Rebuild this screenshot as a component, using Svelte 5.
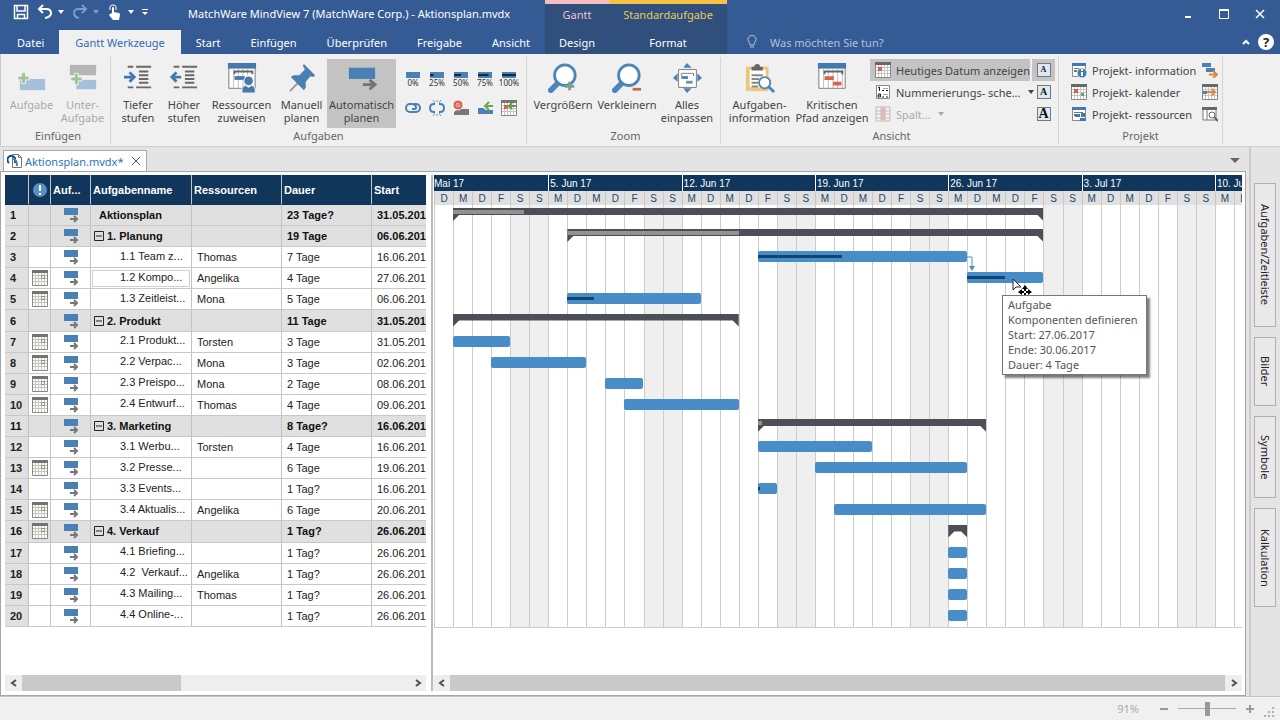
<script>
  // task rows: start / end / done are day offsets from 30.05.2017
  const tasks = [
    { name: 'Aktionsplan', level: 0, dur: '23 Tage?', date: '31.05.201', start: 1, end: 32, done: 4.75 },
    { name: '1. Planung', level: 1, dur: '19 Tage', date: '06.06.201', start: 7, end: 32, done: 16 },
    { name: '1.1 Team z...', level: 2, res: 'Thomas', dur: '7 Tage', date: '16.06.201', start: 17, end: 28, done: 21.4 },
    { name: '1.2 Kompo...', level: 2, cal: true, res: 'Angelika', dur: '4 Tage', date: '27.06.201', start: 28, end: 32, done: 30, selected: true },
    { name: '1.3 Zeitleist...', level: 2, cal: true, res: 'Mona', dur: '5 Tage', date: '06.06.201', start: 7, end: 14, done: 8.4 },
    { name: '2. Produkt', level: 1, dur: '11 Tage', date: '31.05.201', start: 1, end: 16 },
    { name: '2.1 Produkt...', level: 2, cal: true, res: 'Torsten', dur: '3 Tage', date: '31.05.201', start: 1, end: 4 },
    { name: '2.2 Verpac...', level: 2, cal: true, res: 'Mona', dur: '3 Tage', date: '02.06.201', start: 3, end: 8 },
    { name: '2.3 Preispo...', level: 2, cal: true, res: 'Mona', dur: '2 Tage', date: '08.06.201', start: 9, end: 11 },
    { name: '2.4 Entwurf...', level: 2, cal: true, res: 'Thomas', dur: '4 Tage', date: '09.06.201', start: 10, end: 16 },
    { name: '3. Marketing', level: 1, dur: '8 Tage?', date: '16.06.201', start: 17, end: 29, done: 17.2 },
    { name: '3.1 Werbu...', level: 2, res: 'Torsten', dur: '4 Tage', date: '16.06.201', start: 17, end: 23 },
    { name: '3.2 Presse...', level: 2, cal: true, dur: '6 Tage', date: '19.06.201', start: 20, end: 28 },
    { name: '3.3 Events...', level: 2, dur: '1 Tag?', date: '16.06.201', start: 17, end: 18, done: 17.1 },
    { name: '3.4 Aktualis...', level: 2, cal: true, res: 'Angelika', dur: '6 Tage', date: '20.06.201', start: 21, end: 29 },
    { name: '4. Verkauf', level: 1, cal: true, dur: '1 Tag?', date: '26.06.201', start: 27, end: 28 },
    { name: '4.1 Briefing...', level: 2, dur: '1 Tag?', date: '26.06.201', start: 27, end: 28 },
    { name: '4.2  Verkauf...', level: 2, res: 'Angelika', dur: '1 Tag?', date: '26.06.201', start: 27, end: 28 },
    { name: '4.3 Mailing...', level: 2, res: 'Thomas', dur: '1 Tag?', date: '26.06.201', start: 27, end: 28 },
    { name: '4.4 Online-...', level: 2, dur: '1 Tag?', date: '26.06.201', start: 27, end: 28 },
  ]

  const DAYS = 43
  const letters = 'DMDFSSM'
  const days = Array.from({ length: DAYS }, (_, i) => letters[i % 7])
  const isWeekend = (i) => i % 7 === 4 || i % 7 === 5

  const weeks = [
    { label: 'Mai 17', span: 6 },
    { label: '5. Jun 17', span: 7 },
    { label: '12. Jun 17', span: 7 },
    { label: '19. Jun 17', span: 7 },
    { label: '26. Jun 17', span: 7 },
    { label: '3. Jul 17', span: 7 },
    { label: '10. Jul 17', span: 2 },
  ]

  const pct = (n) => (n / DAYS) * 100 + '%'
  const donePct = (t) => ((t.done - t.start) / (t.end - t.start)) * 100 + '%'

  const tabs = ['Datei', 'Gantt Werkzeuge', 'Start', 'Einfügen', 'Überprüfen', 'Freigabe', 'Ansicht']
  let activeTab = $state('Gantt Werkzeuge')

  const progress = [0, 25, 50, 75, 100]
  const linkIcons = ['link', 'unlink', 'block', 'moveback', 'calback']
  const linkTitles = ['Verknüpfen', 'Trennen', 'Sperren', 'Verschieben', 'Kalender']
  const sideTabs = [
    { label: 'Aufgaben/Zeitleiste', size: 'tall' },
    { label: 'Bilder', size: 'short' },
    { label: 'Symbole', size: 'mid' },
    { label: 'Kalkulation', size: 'long' },
  ]

  let question = $state('')
  let zoom = $state(50)
</script>

{#snippet big(name)}
  <svg class="big-icon" viewBox="0 0 32 32" aria-hidden="true">
    {#if name === 'task'}
      <path d="M3 17h27v12H3z" fill="#a6c0da" />
      <path d="M5 10h4v4h4v4H9v4H5v-4H1v-4h4z" fill="#9fc49a" stroke="#f0f0f0" />
    {:else if name === 'subtask'}
      <path d="M2 2h28v11H2z" fill="#b5b5b5" />
      <path d="M9 18h21v10H9z" fill="#a6c0da" />
      <path d="M7 11h4v4h4v4h-4v4H7v-4H3v-4h4z" fill="#9fc49a" stroke="#f0f0f0" />
    {:else if name === 'indent' || name === 'outdent'}
      <path d="M5 4h6M5 26h6M14 4h16M17 9h10M17 13h10M17 17h10M17 21h10M14 26h16" stroke="#686868" stroke-width="2" />
      {#if name === 'indent'}
        <path d="M1 15h10M7 10l5 5-5 5" fill="none" stroke="#4179b0" stroke-width="3" />
      {:else}
        <path d="M4 15h9M8 10l-5 5 5 5" fill="none" stroke="#4179b0" stroke-width="3" />
      {/if}
    {:else if name === 'resources'}
      <path d="M2 1h28v26H2z" fill="#fff" stroke="#777" />
      <path d="M1 0h30v6H1z" fill="#4479ac" />
      <path d="M7 6v21M12 6v21M17 6v21M22 6v21" stroke="#bbb" />
      <path d="M8 12v-3h19v3" fill="none" stroke="#666" stroke-width="2" />
      <path d="M8 14h11v4H8z" fill="#4479ac" />
      <circle cx="23" cy="19" r="5" fill="#4479ac" stroke="#f0f0f0" />
      <path d="M16 32v-4q0-4 4-4l3 2 3-2q4 0 4 4v4z" fill="#4479ac" stroke="#f0f0f0" />
    {:else if name === 'pin'}
      <path d="M13 20L3 30" stroke="#999" stroke-width="2" />
      <path d="M18 1l12 12-2 2-3-1-5 6v6l-2 3L4 15l3-2h6l6-6-2-4z" fill="#4b80b5" />
    {:else if name === 'auto'}
      <path d="M2 5h28v12H2z" fill="#4b80b5" />
      <path d="M17 23h12M24 18l6 5-6 5" fill="none" stroke="#737373" stroke-width="3" />
    {:else if name === 'zoomin' || name === 'zoomout'}
      <path d="M12 20L3 29" stroke="#4b86b9" stroke-width="6" stroke-linecap="round" />
      <circle cx="18" cy="13" r="11" fill="#fff" stroke="#4b86b9" stroke-width="3" />
      {#if name === 'zoomin'}
        <path d="M23 20v9M18 25h10" stroke="#79a18c" stroke-width="3" />
      {:else}
        <path d="M22 28h9" stroke="#d0634c" stroke-width="3" />
      {/if}
    {:else if name === 'fit'}
      <path d="M7 7h19v19H7z" fill="#fff" stroke="#777" />
      <path d="M16 0l5 5H12zM16 32l5-5H12zM1 16l5-5v9zM32 16l-5-5v9z" fill="#4b80b5" />
      <path d="M10 14v-3h13v3" fill="none" stroke="#777" />
      <path d="M10 14h7v3h-7z" fill="#4b80b5" />
      <path d="M15 19h7v3h-7z" fill="#6b9a88" />
    {:else if name === 'clipboard'}
      <path d="M1 4h24v26H1z" fill="#ebc777" />
      <path d="M5 7h17v19H5z" fill="#fff" />
      <path d="M7 8V4h3q0-3 3-3t3 3h3v4z" fill="#666" />
      <path d="M7 13h12M7 17h8M7 21h7M7 25h7" stroke="#888" stroke-width="2" />
      <path d="M25 25l6 6" stroke="#4b86b9" stroke-width="3" />
      <circle cx="21" cy="21" r="6" fill="#fff" stroke="#4b86b9" stroke-width="2" />
    {:else if name === 'critical'}
      <path d="M2 1h28v26H2z" fill="#fff" stroke="#777" />
      <path d="M1 0h30v6H1z" fill="#4479ac" />
      <path d="M7 6v21M12 6v21M17 6v21M22 6v21M27 6v21" stroke="#bbb" />
      <path d="M8 12v-3h19v3" fill="none" stroke="#666" stroke-width="2" />
      <path d="M8 14h10v4H8zM17 20h9v4h-9z" fill="#dc6347" />
    {/if}
  </svg>
{/snippet}

{#snippet small(name)}
  <svg class="small-icon" viewBox="0 0 16 16" aria-hidden="true">
    {#if name === 'link'}
      <path d="M9 12H5a4 4 0 010-8h2q4 0 4 4 0 1-2 1H7" fill="none" stroke="#4b80b5" stroke-width="2" />
      <path d="M9 4h2a4 4 0 010 8H9" fill="none" stroke="#4b80b5" stroke-width="2" />
    {:else if name === 'unlink'}
      <path d="M6 4H5Q1 4 1 8t4 4h1M10 4h1q4 0 4 4t-4 4h-1" fill="none" stroke="#4b80b5" stroke-width="2" />
      <path d="M4 0l2 3M12 0l-2 3M4 16l2-3M12 16l-2-3M8 0v2M8 14v2" stroke="#6b9bc8" />
    {:else if name === 'block'}
      <path d="M5 9h11v6H1v-3z" fill="#777" />
      <circle cx="5" cy="5" r="5" fill="#d8604e" stroke="#f0f0f0" />
      <circle cx="5" cy="5" r="2" fill="none" stroke="#efb3a9" />
      <path d="M3 3l4 4" stroke="#efb3a9" />
    {:else if name === 'moveback'}
      <path d="M1 8h5l3 2h7v4H1z" fill="#4b80b5" />
      <path d="M16 6h-7M12 2L8 6l4 4" fill="none" stroke="#6aa84f" stroke-width="2" />
    {:else if name === 'calback'}
      {@render calendarGrid('#777')}
      <path d="M3 5h4v4H3z" fill="#d8604e" />
      <path d="M15 6H9M11 3L8 6l3 3" fill="none" stroke="#5b9b49" stroke-width="2" />
    {:else if name === 'today'}
      {@render calendarGrid('#686868')}
      <path d="M3 5h4v4H3z" fill="#d8604e" />
    {:else if name === 'pcal'}
      {@render calendarGrid('#686868')}
      <path d="M3 5h4v4H3z" fill="#d8604e" />
      <path d="M10 9h3v3h-3z" fill="#6b9a88" />
    {:else if name === 'calout'}
      {@render calendarGrid('#686868')}
      <path d="M5 8h8M10 5l3 3-3 3" fill="none" stroke="#e48640" stroke-width="2" />
      <path d="M1 7h4v3H1z" fill="#4b80b5" />
    {:else if name === 'row'}
      {@render calendarGrid('#737373')}
      <path d="M9.500 5.500h3v3h-3z" fill="#fff" stroke="#72a554" />
    {:else if name === 'numbering'}
      <path d="M1.500 1.500h13v13h-13z" fill="#fff" stroke="#888" />
      <path d="M3 4l1.500-1v4M3 10h2.500v3H3v-2h2" fill="none" stroke="#222" />
      <path d="M7 6.500h2M11 6.500h2M7 13h2M11 13h2" stroke="#222" />
      <path d="M8 4.500h5M8 10.500h5" stroke="#8bb0d3" />
    {:else if name === 'columns'}
      <path d="M1 1h14v14H1z" fill="#f7f0f0" stroke="#bbb" />
      <path d="M6 1v14M10 1v14M1 5h14M1 8h14M1 12h14" stroke="#c9bcbc" />
      <path d="M6 2h4v12H6z" fill="#e0b9b9" />
    {:else if name === 'pinfo'}
      {@render ganttSheet()}
      <circle cx="11" cy="11" r="5" fill="#4179b0" stroke="#f0f0f0" />
      <path d="M11 10v4M11 7v2" stroke="#fff" stroke-width="2" />
    {:else if name === 'pres'}
      {@render ganttSheet()}
      <path d="M4 8h5v3H4zM9 12h6v3H9zM10 7h4v4h-4z" fill="#4179b0" />
    {:else if name === 'export'}
      <path d="M0 1h9v4H0zM4 6h9v4H4z" fill="#4b80b5" />
      <path d="M7 12.500h7M11 9l4 3.500-4 3.500" fill="none" stroke="#e48640" stroke-width="2" />
    {:else if name === 'search'}
      <path d="M1 2h13v12H1z" fill="#fff" stroke="#777" />
      <path d="M0 1h15v3H0z" fill="#686868" />
      <path d="M5 4v10" stroke="#777" />
      <circle cx="10" cy="9" r="3" fill="#fff" stroke="#666" />
      <path d="M12 11l4 4" stroke="#666" stroke-width="2" />
    {/if}
  </svg>
{/snippet}

{#snippet calendarGrid(color)}
  <path d="M.5.5h15v15H.5z" fill="#fff" stroke="#888" />
  <path d="M3.500 3v12M6.500 3v12M9.500 3v12M12.500 3v12M1 5.500h14M1 8.500h14M1 11.500h14" stroke="#c4c4c4" />
  <path d="M0 0h16v3H0z" fill={color} />
{/snippet}

{#snippet ganttSheet()}
  <path d="M1.500 1.500h13v13h-13z" fill="#fff" stroke="#888" />
  <path d="M1 1h14v3H1z" fill="#4179b0" />
  <path d="M3 6.500h9" stroke="#777" />
  <path d="M3 8h5v2H3z" fill="#4179b0" />
{/snippet}

{#snippet bigButton(icon, lines, cls)}
  <button class="big-button {cls}">
    {@render big(icon)}
    {#each lines as line}<span>{line}</span>{/each}
  </button>
{/snippet}

{#snippet caret()}
  <svg class="caret" viewBox="0 0 6 4" aria-hidden="true"><path d="M0 0h6L3 4z" fill="currentColor" /></svg>
{/snippet}

{#snippet chevron(dir)}
  <svg class="chevron" viewBox="0 0 8 8" aria-hidden="true">
    <path d={dir === 'left' ? 'M6 1L2 4l4 3' : 'M2 1l4 3-4 3'} fill="none" stroke="#505050" stroke-width="2" />
  </svg>
{/snippet}

<div class="app">
  <header>
    <div class="head-left">
      <div class="title-row">
        <div class="quick">
          <button aria-label="Speichern">
            <svg width="16" height="16" viewBox="0 0 16 16"><path d="M1.500 1.500h13v13h-13zM4 1.500V7h8V1.500M4.500 14.500v-4h7v4" fill="none" stroke="#fff" stroke-width="1.500" /></svg>
          </button>
          <button aria-label="Rückgängig" class="with-caret">
            <svg width="16" height="16" viewBox="0 0 16 16"><path d="M6 1L2 5l4 4M2 5h7q5 0 5 4t-6 5" fill="none" stroke="#fff" stroke-width="2" /></svg>
            {@render caret()}
          </button>
          <button aria-label="Wiederholen" class="with-caret dim">
            <svg width="16" height="16" viewBox="0 0 16 16"><path d="M10 1l4 4-4 4M14 5H7Q2 5 2 9t5 5" fill="none" stroke="#7f9bc6" stroke-width="2" /></svg>
            {@render caret()}
          </button>
          <button aria-label="Fingereingabe" class="with-caret">
            <svg width="16" height="16" viewBox="0 0 16 16">
              <path d="M3 6V3q0-2 3-2t3 2v3" fill="none" stroke="#fff" />
              <path d="M5 9V4q0-1 1-1t1 1v4l5 1q1 0 1 2l-1 5H6l-4-5 1-1z" fill="#fff" />
            </svg>
            {@render caret()}
          </button>
          <button aria-label="Anpassen">
            <svg width="6" height="8" viewBox="0 0 6 8"><path d="M0 1.500h6" stroke="#fff" /><path d="M0 4h6L3 7z" fill="#fff" /></svg>
          </button>
        </div>
        <span class="title">MatchWare MindView 7 (MatchWare Corp.) - Aktionsplan.mvdx</span>
      </div>
      <nav class="tabs">
        {#each tabs as tab}
          <button class="tab" class:active={tab === activeTab} onclick={() => (activeTab = tab)}>{tab}</button>
        {/each}
      </nav>
    </div>
    <div class="context pink">
      <span>Gantt</span>
      <button class="tab">Design</button>
    </div>
    <div class="context gold">
      <span>Standardaufgabe</span>
      <button class="tab">Format</button>
    </div>
    <div class="head-right">
      <div class="window-buttons">
        <button aria-label="Minimieren"><svg width="12" height="12" viewBox="0 0 12 12"><path d="M3 9h6" stroke="#fff" stroke-width="2" /></svg></button>
        <button aria-label="Maximieren"><svg width="12" height="12" viewBox="0 0 12 12"><path d="M1.500 1.500h9v9h-9zM2 2.500h8" fill="none" stroke="#fff" /></svg></button>
        <button aria-label="Schließen"><svg width="12" height="12" viewBox="0 0 12 12"><path d="M2 2l8 8M10 2l-8 8" stroke="#fff" stroke-width="1.500" /></svg></button>
      </div>
      <div class="ask-row">
        <svg width="10" height="14" viewBox="0 0 10 14" aria-hidden="true"><path d="M3 10Q3 8 2 7a4 4 0 116 0q-1 1-1 3zM3 12h4" fill="none" stroke="#b3c2dd" /></svg>
        <input type="text" aria-label="Suche" placeholder="Was möchten Sie tun?" bind:value={question} />
        <button aria-label="Menüband reduzieren"><svg width="8" height="8" viewBox="0 0 8 8"><path d="M1 6l3-3 3 3" fill="none" stroke="#fff" stroke-width="2" /></svg></button>
        <button class="help" aria-label="Hilfe">?</button>
      </div>
    </div>
  </header>

  <section class="ribbon">
    <div class="group insert">
      <div class="items">
        {@render bigButton('task', ['Aufgabe'], 'disabled w50')}
        {@render bigButton('subtask', ['Unter-', 'Aufgabe'], 'disabled w50')}
      </div>
      <h2>Einfügen</h2>
    </div>
    <div class="group tasks">
      <div class="items">
        {@render bigButton('indent', ['Tiefer', 'stufen'], 'w46')}
        {@render bigButton('outdent', ['Höher', 'stufen'], 'w46')}
        {@render bigButton('resources', ['Ressourcen', 'zuweisen'], 'w68')}
        {@render bigButton('pin', ['Manuell', 'planen'], 'w50')}
        {@render bigButton('auto', ['Automatisch', 'planen'], 'w68 pressed')}
        <div class="icon-grid">
          {#each progress as p}
            <button class="progress" aria-label="{p}% abgeschlossen">
              <svg width="20" height="16" viewBox="0 0 20 16">
                <path d="M3 1h14v6H3z" fill="#4b80b5" />
                <path d="M3 3h{(14 * p) / 100}v2H3z" fill="#16263c" />
                <text x="10" y="15" text-anchor="middle">{p}%</text>
              </svg>
            </button>
          {/each}
          {#each linkIcons as name, i}
            <button aria-label={linkTitles[i]}>{@render small(name)}</button>
          {/each}
        </div>
      </div>
      <h2>Aufgaben</h2>
    </div>
    <div class="group zoom">
      <div class="items">
        {@render bigButton('zoomin', ['Vergrößern'], 'w64')}
        {@render bigButton('zoomout', ['Verkleinern'], 'w64')}
        {@render bigButton('fit', ['Alles', 'einpassen'], 'w56')}
      </div>
      <h2>Zoom</h2>
    </div>
    <div class="group view">
      <div class="items">
        {@render bigButton('clipboard', ['Aufgaben-', 'information'], 'w68')}
        {@render bigButton('critical', ['Kritischen', 'Pfad anzeigen'], 'w76')}
        <div class="list">
          <button class="line pressed">{@render small('today')}<span>Heutiges Datum anzeigen</span></button>
          <button class="line">{@render small('numbering')}<span>Nummerierungs- sche...</span>{@render caret()}</button>
          <button class="line disabled">{@render small('columns')}<span>Spalt...</span>{@render caret()}</button>
        </div>
        <div class="list sizes">
          <button class="line pressed" aria-label="Kleine Schrift"><span class="letter s">A</span></button>
          <button class="line" aria-label="Mittlere Schrift"><span class="letter m">A</span></button>
          <button class="line" aria-label="Große Schrift"><span class="letter l">A</span></button>
        </div>
      </div>
      <h2>Ansicht</h2>
    </div>
    <div class="group project">
      <div class="items">
        <div class="list">
          <button class="line">{@render small('pinfo')}<span>Projekt- information</span></button>
          <button class="line">{@render small('pcal')}<span>Projekt- kalender</span></button>
          <button class="line">{@render small('pres')}<span>Projekt- ressourcen</span></button>
        </div>
        <div class="list sizes">
          <button class="line" aria-label="Exportieren">{@render small('export')}</button>
          <button class="line" aria-label="Kalender verschieben">{@render small('calout')}</button>
          <button class="line" aria-label="Ressourcen suchen">{@render small('search')}</button>
        </div>
      </div>
      <h2>Projekt</h2>
    </div>
  </section>

  <div class="workspace">
    <div class="document">
      <div class="doc-tabs">
        <div class="doc-tab">
          <svg width="16" height="16" viewBox="0 0 16 16" aria-hidden="true">
            <path d="M5.500 1.500h6l3 3v10h-9z" fill="#fff" stroke="#777" />
            <path d="M11.500 1.500v3h3" fill="none" stroke="#777" />
            <path d="M2 10a4 4 0 116-5v5" fill="none" stroke="#14507f" stroke-width="2" />
            <path d="M6 6q4 0 4 7" fill="none" stroke="#4b86b9" stroke-width="2" />
          </svg>
          <span>Aktionsplan.mvdx*</span>
          <button aria-label="Schließen"><svg width="10" height="10" viewBox="0 0 10 10"><path d="M1 1l8 8M9 1L1 9" stroke="#555" /></svg></button>
        </div>
        <button class="doc-menu" aria-label="Dokumente"><svg width="10" height="6" viewBox="0 0 10 6"><path d="M0 0h10L5 5z" fill="#666" /></svg></button>
      </div>

      <div class="panes">
        <div class="pane sheet">
          <div class="clip">
            <table>
              <thead>
                <tr>
                  <th class="num" aria-label="Nummer"></th>
                  <th class="info">
                    <svg width="16" height="16" viewBox="0 0 16 16" aria-label="Hinweis"><circle cx="8" cy="8" r="7" fill="#5b8fc4" /><path d="M8 3v6M8 11v2" stroke="#fff" stroke-width="2" /></svg>
                  </th>
                  <th class="mode">Auf...</th>
                  <th class="name">Aufgabenname</th>
                  <th class="res">Ressourcen</th>
                  <th class="dur">Dauer</th>
                  <th class="date">Start</th>
                </tr>
              </thead>
              <tbody>
                {#each tasks as task, i}
                  <tr class:summary={task.level < 2}>
                    <th scope="row">{i + 1}</th>
                    <td class="center">{#if task.cal}{@render small('row')}{/if}</td>
                    <td class="center">
                      <svg class="mode-icon" viewBox="0 0 16 16" aria-hidden="true">
                        <path d="M1 1h14v7H1z" fill="#4b80b5" />
                        <path d="M7 12h7M11 9l3 3-3 3" fill="none" stroke="#777" stroke-width="2" />
                      </svg>
                    </td>
                    <td class="name-cell level{task.level}" class:selected={task.selected}>
                      <div>
                        {#if task.level === 1}
                          <svg width="10" height="10" viewBox="0 0 10 10" aria-hidden="true"><path d="M.5.5h9v9h-9zM2 5h6" fill="none" stroke="#222" /></svg>
                        {/if}
                        <span>{task.name}</span>
                      </div>
                    </td>
                    <td>{task.res ?? ''}</td>
                    <td>{task.dur}</td>
                    <td>{task.date}</td>
                  </tr>
                {/each}
              </tbody>
            </table>
          </div>
          <div class="scrollbar">
            <button aria-label="Nach links">{@render chevron('left')}</button>
            <div class="track"><div class="thumb part"></div></div>
            <button aria-label="Nach rechts">{@render chevron('right')}</button>
          </div>
        </div>

        <div class="pane chart">
          <div class="clip">
            <div class="timeline">
              <div class="weeks">
                {#each weeks as week}
                  <div style="grid-column: span {week.span}"><span>{week.label}</span></div>
                {/each}
              </div>
              <div class="days">
                {#each days as day}<div>{day}</div>{/each}
              </div>
              <div class="plot">
                <div class="columns">
                  {#each days as _, i}<div class:weekend={isWeekend(i)}></div>{/each}
                </div>
                <div class="rows">
                  {#each tasks as task}
                    <div class="row">
                      <div
                        class="bar"
                        class:sum={task.level < 2}
                        style="left: {pct(task.start)}; width: {pct(task.end - task.start)}"
                      >
                        {#if task.done}<div class="done" style="width: {donePct(task)}"></div>{/if}
                      </div>
                    </div>
                  {/each}
                </div>
                <svg class="dependency" viewBox="0 0 8 16" style="left: {pct(28)}" aria-hidden="true">
                  <path d="M0 1h5v12" fill="none" stroke="#4b8fc8" />
                  <path d="M2 10h6l-3 5z" fill="#4b8fc8" />
                </svg>
                <svg class="pointer" viewBox="0 0 22 22" aria-hidden="true">
                  <path d="M2 1v11l3-3 5 0z" fill="#fff" stroke="#222" />
                  <path d="M14 9v10M9 14h10" stroke="#000" stroke-width="2" />
                  <path d="M14 7l3 4h-6zM14 21l3-4h-6zM7 14l4-3v6zM21 14l-4-3v6z" fill="#000" />
                  <path d="M13 13h2v2h-2z" fill="#fff" />
                </svg>
                <div class="tooltip" role="tooltip">
                  <div>Aufgabe</div>
                  <div>Komponenten definieren</div>
                  <div>Start: 27.06.2017</div>
                  <div>Ende: 30.06.2017</div>
                  <div>Dauer: 4 Tage</div>
                </div>
              </div>
            </div>
          </div>
          <div class="scrollbar">
            <button aria-label="Nach links">{@render chevron('left')}</button>
            <div class="track"><div class="thumb"></div></div>
            <button aria-label="Nach rechts">{@render chevron('right')}</button>
          </div>
        </div>
      </div>
    </div>

    <aside>
      {#each sideTabs as tab}
        <button class="side-tab {tab.size}">{tab.label}</button>
      {/each}
    </aside>
  </div>

  <footer>
    <label for="zoom">91%</label>
    <button aria-label="Verkleinern"><svg width="8" height="8" viewBox="0 0 8 8"><path d="M0 4h8" stroke="#999" stroke-width="2" /></svg></button>
    <input id="zoom" type="range" min="0" max="100" bind:value={zoom} />
    <button aria-label="Vergrößern"><svg width="8" height="8" viewBox="0 0 8 8"><path d="M0 4h8M4 0v8" stroke="#999" stroke-width="2" /></svg></button>
    <svg class="grip" width="10" height="10" viewBox="0 0 10 10" aria-hidden="true"><path d="M8 0h2v2H8zM4 4h2v2H4zM8 4h2v2H8zM0 8h2v2H0zM4 8h2v2H4zM8 8h2v2H8z" fill="#b0b0b0" /></svg>
  </footer>
</div>

<style>
  :global(body) {
    background: #f0f0f0;
  }

  * {
    box-sizing: border-box;
  }

  .app {
    min-height: 100vh;
    display: flex;
    flex-direction: column;
    font-family: 'Noto Sans', 'Open Sans', sans-serif;
    font-size: 11px;
    color: #444;
    overflow: hidden;
  }

  button,
  input {
    font: inherit;
    color: inherit;
    border: 0;
    background: none;
    padding: 0;
    margin: 0;
  }

  svg {
    display: block;
    flex-shrink: 0;
  }

  /* title bar and tabs */
  header {
    display: flex;
    height: 54px;
    background: #355b95;
    color: #fff;
  }

  .head-left {
    display: flex;
    flex-direction: column;
  }

  .title-row {
    height: 30px;
    display: flex;
    align-items: center;
    padding: 0 0 4px 13px;
    gap: 40px;
  }

  .quick {
    display: flex;
    align-items: center;
    gap: 8px;
    padding-bottom: 2px;
  }

  .quick button {
    display: flex;
    align-items: center;
    gap: 5px;
  }

  .caret {
    width: 6px;
    height: 4px;
  }

  .dim {
    color: #7f9bc6;
  }

  .title {
    white-space: nowrap;
  }

  .tabs {
    display: flex;
    flex: 1;
    padding-left: 2px;
  }

  .tab {
    height: 24px;
    padding: 0 15px;
    white-space: nowrap;
  }

  .tab.active {
    padding: 0 16px;
    background: #f0f0f0;
    color: #2f6db5;
  }

  .context {
    background: #304f7d;
    border-top: 4px solid #f5bdc0;
    display: flex;
    flex-direction: column;
    align-items: center;
    width: 64px;
  }

  .context span {
    height: 26px;
    line-height: 21px;
    color: #edc3cc;
  }

  .context.gold {
    border-color: #f5c243;
    width: 118px;
  }

  .context.gold span {
    color: #e8c95f;
  }

  .head-right {
    flex: 1;
    display: flex;
    flex-direction: column;
  }

  .window-buttons {
    height: 30px;
    display: flex;
    justify-content: flex-end;
    align-items: center;
    gap: 24px;
    padding: 0 14px 2px 0;
  }

  .ask-row {
    flex: 1;
    display: flex;
    align-items: center;
    gap: 8px;
    padding: 0 6px 0 20px;
  }

  .ask-row input {
    flex: 1;
    padding-left: 5px;
    outline: none;
  }

  .ask-row input::placeholder {
    color: #b3c2dd;
    opacity: 1;
  }

  .help {
    width: 16px;
    height: 16px;
    border-radius: 50%;
    background: #fff;
    color: #222;
    font-weight: 700;
    font-size: 13px;
    line-height: 16px;
  }

  /* ribbon */
  .ribbon {
    display: flex;
    height: 93px;
    padding-left: 3px;
    background: #f0f0f0;
    border-bottom: 1px solid #cfcfcf;
    border-left: 1px solid #ccc;
  }

  .group {
    margin: 3px 0 2px;
    padding-top: 2px;
    border-right: 1px solid #d5d5d5;
    display: flex;
    flex-direction: column;
  }

  .group h2 {
    margin: 0;
    font-size: 11px;
    font-weight: 400;
    line-height: 16px;
    text-align: center;
    color: #666;
  }

  .items {
    display: flex;
    flex-shrink: 0;
    height: 69px;
  }

  .insert {
    width: 107px;
    padding-left: 2px;
  }

  .tasks {
    width: 416px;
    padding-left: 4px;
  }

  .tasks h2 {
    padding-right: 4px;
  }

  .zoom {
    width: 194px;
    padding-left: 4px;
  }

  .view {
    width: 338px;
    padding-left: 4px;
  }

  .project {
    width: 164px;
    padding-left: 7px;
  }

  .project h2 {
    padding-right: 7px;
  }

  .big-button {
    display: flex;
    flex-direction: column;
    align-items: center;
    padding-top: 4px;
    line-height: 13px;
    white-space: nowrap;
  }

  .big-icon {
    width: 30px;
    height: 30px;
    margin-bottom: 5px;
  }

  .w46 { width: 46px; }
  .w50 { width: 51px; }
  .w56 { width: 56px; }
  .w64 { width: 64px; }
  .w68 { width: 69px; }
  .w76 { width: 76px; }

  .pressed {
    background: #c3c3c3;
  }

  .disabled {
    color: #aaa;
  }

  .icon-grid {
    display: grid;
    grid-template-columns: repeat(5, 24px);
    grid-template-rows: 29px 29px;
    align-content: start;
    padding: 5px 0 0 5px;
  }

  .icon-grid button {
    display: flex;
    align-items: center;
    justify-content: center;
  }

  .icon-grid text {
    font-family: 'Noto Sans', sans-serif;
    font-size: 8px;
    fill: #333;
  }

  .small-icon {
    width: 16px;
    height: 16px;
  }

  .list {
    display: flex;
    flex-direction: column;
    width: 160px;
  }

  .line {
    height: 22px;
    padding: 0 5px;
    display: flex;
    align-items: center;
    gap: 5px;
    white-space: nowrap;
  }

  .view .list .caret {
    margin-left: 2px;
  }

  .project .list {
    width: 130px;
  }

  .view .list.sizes,
  .project .list.sizes {
    width: 23px;
    margin-left: 2px;
  }

  .sizes .line {
    padding: 0;
    justify-content: center;
  }

  .letter {
    width: 14px;
    height: 14px;
    border: 1px solid #777;
    background: #dce9f5;
    color: #111;
    font-family: 'Liberation Serif', serif;
    font-weight: 700;
    line-height: 12px;
    text-align: center;
  }

  .letter.s { font-size: 8px; }
  .letter.m { font-size: 10px; }
  .letter.l { font-size: 14px; }

  /* document area */
  .workspace {
    flex: 1;
    display: flex;
    background: #e4e4e4;
  }

  .document {
    flex: 1;
    min-width: 0;
    display: flex;
    flex-direction: column;
    border-right: 1px solid #ccc;
    padding-right: 3px;
  }

  .doc-tabs {
    height: 24px;
    padding: 3px 6px 0 3px;
    display: flex;
    justify-content: space-between;
  }

  .doc-tab {
    display: flex;
    align-items: center;
    gap: 2px;
    padding: 0 5px 0 3px;
    background: #fff;
    border: 1px solid #aaa;
    border-bottom: 0;
    color: #2f73b8;
  }

  .doc-tab button {
    margin-left: 6px;
  }

  .panes {
    flex: 1;
    display: flex;
    padding: 3px 3px 4px 4px;
    gap: 5px;
    background: #fff;
    border: 1px solid #a5a5a5;
  }

  .pane {
    display: flex;
    flex-direction: column;
    min-width: 0;
    font-family: 'Liberation Sans', sans-serif;
  }

  .sheet {
    width: 421px;
  }

  .chart {
    flex: 1;
    border-left: 2px solid #bbb;
  }

  .clip {
    flex: 1;
    overflow: hidden;
  }

  table {
    width: 467px;
    height: 452px;
    table-layout: fixed;
    border-collapse: separate;
    border-spacing: 0;
    color: #222;
  }

  th,
  td {
    padding: 0 5px;
    border-right: 1px solid #c4c4c4;
    border-bottom: 1px solid #c8c8c8;
    text-align: left;
    white-space: nowrap;
    overflow: hidden;
  }

  thead th {
    height: 30px;
    padding: 0 2px;
    background: #10365c;
    border-bottom-color: #10365c;
    color: #fff;
  }

  thead .info {
    padding-left: 3px;
  }

  .num { width: 24px; }
  .info { width: 22px; }
  .mode { width: 40px; }
  .name { width: 101px; }
  .res { width: 90px; }
  .dur { width: 90px; }
  .date { width: 100px; }

  tbody th,
  .summary td {
    background: #e0e0e0;
  }

  .summary {
    color: #111;
    font-weight: 700;
  }

  .center {
    padding: 0 2px 0 3px;
  }

  .mode-icon {
    width: 16px;
    height: 16px;
    margin: 0 auto;
  }

  .name-cell {
    padding: 1px;
  }

  .name-cell div {
    display: flex;
    align-items: center;
    gap: 3px;
    height: 17px;
    padding: 0 2px;
    white-space: pre;
  }

  .level0 div {
    padding-left: 7px;
  }

  .level2 div {
    padding: 0 0 3px 28px;
  }

  .selected div {
    border: 1px solid #d0d0d0;
    padding-left: 27px;
  }

  .scrollbar {
    display: flex;
    height: 16px;
    background: #eee;
  }

  .scrollbar button {
    width: 17px;
    display: flex;
    align-items: center;
    justify-content: center;
  }

  .chevron {
    width: 8px;
    height: 8px;
  }

  .track {
    flex: 1;
  }

  .thumb {
    height: 100%;
    background: #c9c9c9;
  }

  .thumb.part {
    width: 41%;
  }

  /* gantt chart, 43 day columns */
  .timeline {
    width: 820px;
    padding-left: 1px;
  }

  .weeks,
  .days,
  .columns {
    display: grid;
    grid-template-columns: repeat(43, minmax(0, 1fr));
  }

  .weeks {
    height: 16px;
    background: #10365c;
    color: #fff;
    font-size: 10px;
    line-height: 17px;
  }

  .weeks div {
    border-left: 1px solid #fff;
    padding-left: 1px;
    white-space: nowrap;
    overflow: hidden;
  }

  .weeks div:first-child {
    border-left: 0;
    padding: 0;
  }

  .days {
    height: 14px;
    background: #e0e0e0;
    color: #24466b;
    font-size: 10px;
    line-height: 15px;
    text-align: center;
  }

  .days div {
    border-left: 1px solid #c8c8c8;
  }

  .plot {
    position: relative;
    height: 423px;
    border-bottom: 1px solid #ccc;
  }

  .columns {
    height: 100%;
  }

  .columns div {
    border-left: 1px solid #ccc;
  }

  .columns .weekend {
    background: #efefef;
  }

  .rows {
    position: absolute;
    inset: 0;
    display: grid;
    grid-template-rows: repeat(20, 1fr);
  }

  .row {
    position: relative;
  }

  .bar {
    position: absolute;
    top: 4px;
    height: 11px;
    border-radius: 2px;
    background: #488dc7;
  }

  .done {
    margin-top: 4px;
    height: 3px;
    background: #124470;
  }

  .bar.sum {
    top: 3px;
    height: 13px;
    border-radius: 0;
    background: #4c5056;
    clip-path: polygon(0 0, 100% 0, 100% 100%, calc(100% - 6px) 7px, 6px 7px, 0 100%);
  }

  .sum .done {
    margin-top: 2px;
    height: 4px;
    background: #929292;
  }

  .dependency {
    position: absolute;
    top: 51px;
    width: 8px;
    height: 16px;
  }

  .pointer {
    position: absolute;
    top: 73px;
    left: 577px;
    width: 22px;
    height: 22px;
  }

  .tooltip {
    position: absolute;
    top: 90px;
    left: 568px;
    padding: 1px 8px 2px 5px;
    background: #fff;
    border: 1px solid #777;
    box-shadow: 3px 3px 2px rgba(0, 0, 0, 0.5);
    font-family: 'Noto Sans', sans-serif;
    line-height: 15px;
    color: #555;
    white-space: nowrap;
  }

  aside {
    width: 30px;
    padding: 36px 4px 0 3px;
    border-left: 1px solid #ccc;
    display: flex;
    flex-direction: column;
    align-items: stretch;
    gap: 10px;
  }

  .side-tab {
    writing-mode: vertical-rl;
    border: 1px solid #b0b0b0;
    background: #e9e9e9;
    text-align: center;
    color: #222;
  }

  .tall { height: 144px; }
  .short { height: 69px; }
  .mid { height: 82px; }
  .long { height: 99px; }

  footer {
    height: 24px;
    display: flex;
    align-items: center;
    justify-content: flex-end;
    gap: 10px;
    padding-right: 6px;
    border-top: 1px solid #c4c4c4;
    background: #f0f0f0;
    color: #aaa;
  }

  footer label {
    margin-right: 11px;
  }

  input[type='range'] {
    appearance: none;
    width: 58px;
    height: 14px;
    background: linear-gradient(#aaa, #aaa) center / 100% 1px no-repeat;
  }

  input[type='range']::-webkit-slider-thumb {
    appearance: none;
    width: 5px;
    height: 14px;
    background: #999;
  }

  .grip {
    margin-top: 6px;
  }
</style>
